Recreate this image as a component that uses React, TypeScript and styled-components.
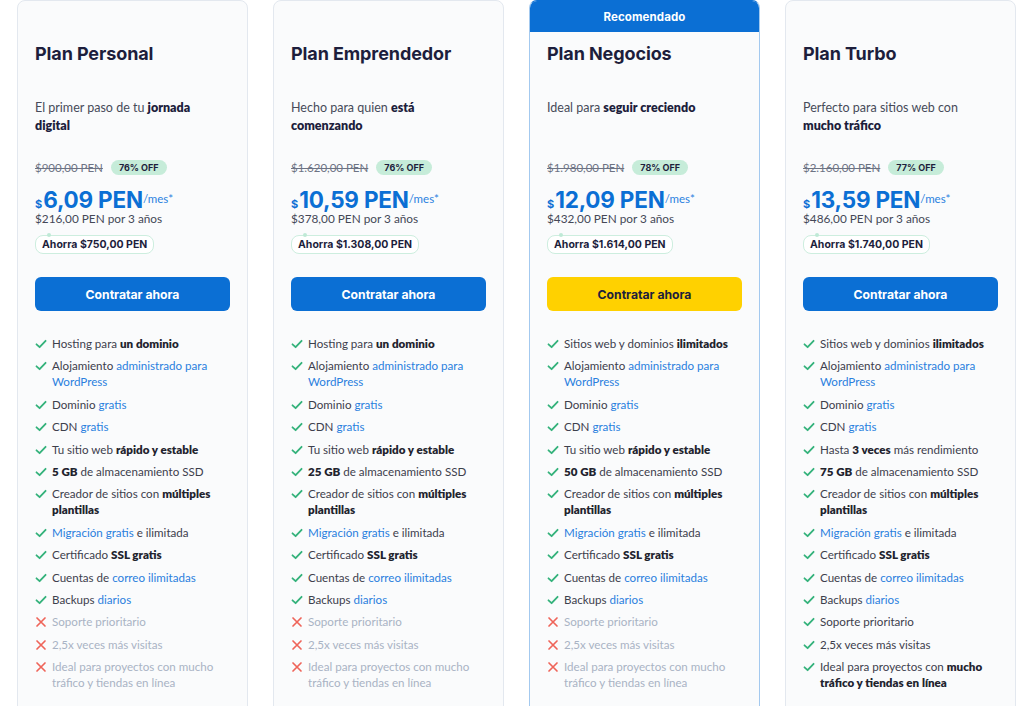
import React from "react";
import styled, { createGlobalStyle } from "styled-components";

const GlobalStyle = createGlobalStyle`
  html, body { margin: 0; padding: 0; background: #ffffff; }
  body { font-family: Inter, "Noto Sans", Arial, sans-serif; -webkit-font-smoothing: antialiased; }
  * { box-sizing: border-box; }
`;

const BLUE = "#0b6fd4";
const NAVY = "#1d1e3c";
const BODY_FONT = `Lato, "Open Sans", Arial, sans-serif`;

const Page = styled.div`
  display: flex;
  gap: 25px;
  padding: 0 0 0 17px;
  height: 706px;
  overflow: hidden;
`;

const Card = styled.div<{ $featured?: boolean }>`
  width: 231px;
  flex: none;
  height: 760px;
  display: flex;
  flex-direction: column;
  background: #fafbfc;
  border: 1px solid ${(p) => (p.$featured ? "#a3c9ef" : "#e3e8ef")};
  border-top-color: ${(p) => (p.$featured ? BLUE : "#e3e8ef")};
  border-radius: 8px;
  overflow: hidden;
`;

const Ribbon = styled.div<{ $show?: boolean }>`
  height: 31px;
  flex: none;
  margin: 0 -1px;
  display: flex;
  align-items: center;
  justify-content: center;
  background: ${(p) => (p.$show ? BLUE : "transparent")};
  color: #ffffff;
  font-size: 11.5px;
  font-weight: 700;
  letter-spacing: 0.1px;
`;

const Body = styled.div`
  padding: 0 17px;
  display: flex;
  flex-direction: column;
`;

const Title = styled.h2`
  margin: 10px 0 0;
  font-size: 18px;
  line-height: 24px;
  font-weight: 700;
  color: ${NAVY};
  letter-spacing: -0.1px;
`;

const Desc = styled.p`
  margin: 33px 0 0;
  max-width: 182px;
  min-height: 36px;
  font-family: ${BODY_FONT};
  font-size: 12.5px;
  line-height: 18px;
  color: #474b5a;
  b { color: ${NAVY}; font-weight: 800; }
`;

const OldRow = styled.div`
  margin-top: 24px;
  height: 16px;
  display: flex;
  align-items: center;
  gap: 8px;
`;

const OldPrice = styled.span`
  font-family: ${BODY_FONT};
  font-size: 11.5px;
  color: #6d7384;
  text-decoration: line-through;
`;

const OffBadge = styled.span`
  height: 15px;
  padding: 0 8px;
  border-radius: 8px;
  background: #c6ecd9;
  color: ${NAVY};
  font-size: 9px;
  font-weight: 700;
  display: inline-flex;
  align-items: center;
`;

const PriceRow = styled.div`
  margin-top: 14px;
  height: 22px;
  display: flex;
  align-items: baseline;
  color: ${BLUE};
`;

const Currency = styled.span`
  font-size: 11px;
  font-weight: 700;
  margin-right: 1px;
`;

const Amount = styled.span`
  font-size: 22.5px;
  font-weight: 700;
  letter-spacing: -0.2px;
  line-height: 22px;
`;

const Per = styled.span`
  font-family: ${BODY_FONT};
  font-size: 11.5px;
  color: #2b82e0;
  position: relative;
  top: -5px;
`;

const Total = styled.div`
  margin-top: 1px;
  font-family: ${BODY_FONT};
  font-size: 11.8px;
  line-height: 14px;
  color: #444857;
`;

const SaveBadge = styled.div`
  position: relative;
  align-self: flex-start;
  margin-top: 9px;
  height: 19px;
  padding: 0 6px;
  border: 1px solid #cdeedf;
  border-radius: 8px;
  background: #ffffff;
  color: ${NAVY};
  font-size: 10.5px;
  font-weight: 700;
  display: flex;
  align-items: center;
  &::before {
    content: "";
    position: absolute;
    left: 11px;
    top: -3px;
    width: 4px;
    height: 4px;
    border-radius: 50%;
    background: #bfe9d6;
  }
`;

const Button = styled.button<{ $yellow?: boolean }>`
  margin-top: 23px;
  height: 34px;
  width: 100%;
  border: none;
  border-radius: 6px;
  background: ${(p) => (p.$yellow ? "#ffd100" : BLUE)};
  color: ${(p) => (p.$yellow ? NAVY : "#ffffff")};
  font-family: inherit;
  font-size: 12.2px;
  font-weight: 700;
  cursor: pointer;
`;

const Features = styled.ul`
  list-style: none;
  margin: 25px 0 0;
  padding: 0;
  display: flex;
  flex-direction: column;
  gap: 6.4px;
`;

const Feature = styled.li<{ $off?: boolean }>`
  display: grid;
  grid-template-columns: 17px 1fr;
  font-family: ${BODY_FONT};
  font-size: 11.6px;
  line-height: 16px;
  color: ${(p) => (p.$off ? "#a9b3c4" : "#3d404c")};
  b { font-weight: 800; color: ${(p) => (p.$off ? "#a9b3c4" : "#22232e")}; }
  a { color: ${(p) => (p.$off ? "#a9b3c4" : "#2a7fde")}; text-decoration: none; }
`;

const IconCell = styled.span`
  display: flex;
  align-items: center;
  height: 16px;
`;

const CheckIcon = () => (
  <svg width="12" height="12" viewBox="0 0 12 12" fill="none">
    <path d="M1.5 6.3 L4.6 9.2 L10.6 2.8" stroke="#34b27b" strokeWidth="1.8" strokeLinecap="round" strokeLinejoin="round" />
  </svg>
);

const XIcon = () => (
  <svg width="12" height="12" viewBox="0 0 12 12" fill="none">
    <path d="M2 2 L10 10 M10 2 L2 10" stroke="#ef6459" strokeWidth="1.7" strokeLinecap="round" />
  </svg>
);

function renderRich(text: string): React.ReactNode[] {
  const out: React.ReactNode[] = [];
  const re = /\*\*(.+?)\*\*|\[(.+?)\]/g;
  let last = 0;
  let m: RegExpExecArray | null;
  let k = 0;
  while ((m = re.exec(text))) {
    if (m.index > last) out.push(text.slice(last, m.index));
    if (m[1]) out.push(<b key={k++}>{m[1]}</b>);
    else out.push(<a key={k++} href="#">{m[2]}</a>);
    last = m.index + m[0].length;
  }
  if (last < text.length) out.push(text.slice(last));
  return out;
}

type Plan = {
  name: string;
  desc: string;
  old: string;
  off: string;
  price: string;
  total: string;
  save: string;
  featured?: boolean;
  features: [boolean, string][];
};

const common = (first: string, speed: string, gb: string, premium: boolean): [boolean, string][] => [
  [true, first],
  [true, "Alojamiento [administrado para WordPress]"],
  [true, "Dominio [gratis]"],
  [true, "CDN [gratis]"],
  [true, speed],
  [true, `**${gb} GB** de almacenamiento SSD`],
  [true, "Creador de sitios con **múltiples plantillas**"],
  [true, "[Migración gratis] e ilimitada"],
  [true, "Certificado **SSL gratis**"],
  [true, "Cuentas de [correo ilimitadas]"],
  [true, "Backups [diarios]"],
  [premium, "Soporte prioritario"],
  [premium, "2,5x veces más visitas"],
  [
    premium,
    premium
      ? "Ideal para proyectos con **mucho tráfico y tiendas en línea**"
      : "Ideal para proyectos con mucho tráfico y tiendas en línea",
  ],
];

const plans: Plan[] = [
  {
    name: "Plan Personal",
    desc: "El primer paso de tu **jornada digital**",
    old: "$900,00 PEN",
    off: "76% OFF",
    price: "6,09 PEN",
    total: "$216,00 PEN por 3 años",
    save: "Ahorra $750,00 PEN",
    features: common("Hosting para **un dominio**", "Tu sitio web **rápido y estable**", "5", false),
  },
  {
    name: "Plan Emprendedor",
    desc: "Hecho para quien **está comenzando**",
    old: "$1.620,00 PEN",
    off: "76% OFF",
    price: "10,59 PEN",
    total: "$378,00 PEN por 3 años",
    save: "Ahorra $1.308,00 PEN",
    features: common("Hosting para **un dominio**", "Tu sitio web **rápido y estable**", "25", false),
  },
  {
    name: "Plan Negocios",
    desc: "Ideal para **seguir creciendo**",
    old: "$1.980,00 PEN",
    off: "78% OFF",
    price: "12,09 PEN",
    total: "$432,00 PEN por 3 años",
    save: "Ahorra $1.614,00 PEN",
    featured: true,
    features: common("Sitios web y dominios **ilimitados**", "Tu sitio web **rápido y estable**", "50", false),
  },
  {
    name: "Plan Turbo",
    desc: "Perfecto para sitios web con **mucho tráfico**",
    old: "$2.160,00 PEN",
    off: "77% OFF",
    price: "13,59 PEN",
    total: "$486,00 PEN por 3 años",
    save: "Ahorra $1.740,00 PEN",
    features: common("Sitios web y dominios **ilimitados**", "Hasta **3 veces** más rendimiento", "75", true),
  },
];

export default function App() {
  return (
    <>
      <GlobalStyle />
      <Page>
        {plans.map((p) => (
          <Card key={p.name} $featured={p.featured}>
            <Ribbon $show={p.featured}>{p.featured ? "Recomendado" : null}</Ribbon>
            <Body>
              <Title>{p.name}</Title>
              <Desc>{renderRich(p.desc)}</Desc>
              <OldRow>
                <OldPrice>{p.old}</OldPrice>
                <OffBadge>{p.off}</OffBadge>
              </OldRow>
              <PriceRow>
                <Currency>$</Currency>
                <Amount>{p.price}</Amount>
                <Per>/mes*</Per>
              </PriceRow>
              <Total>{p.total}</Total>
              <SaveBadge>{p.save}</SaveBadge>
              <Button $yellow={p.featured}>Contratar ahora</Button>
              <Features>
                {p.features.map(([ok, t], i) => (
                  <Feature key={i} $off={!ok}>
                    <IconCell>{ok ? <CheckIcon /> : <XIcon />}</IconCell>
                    <span>{renderRich(t)}</span>
                  </Feature>
                ))}
              </Features>
            </Body>
          </Card>
        ))}
      </Page>
    </>
  );
}
